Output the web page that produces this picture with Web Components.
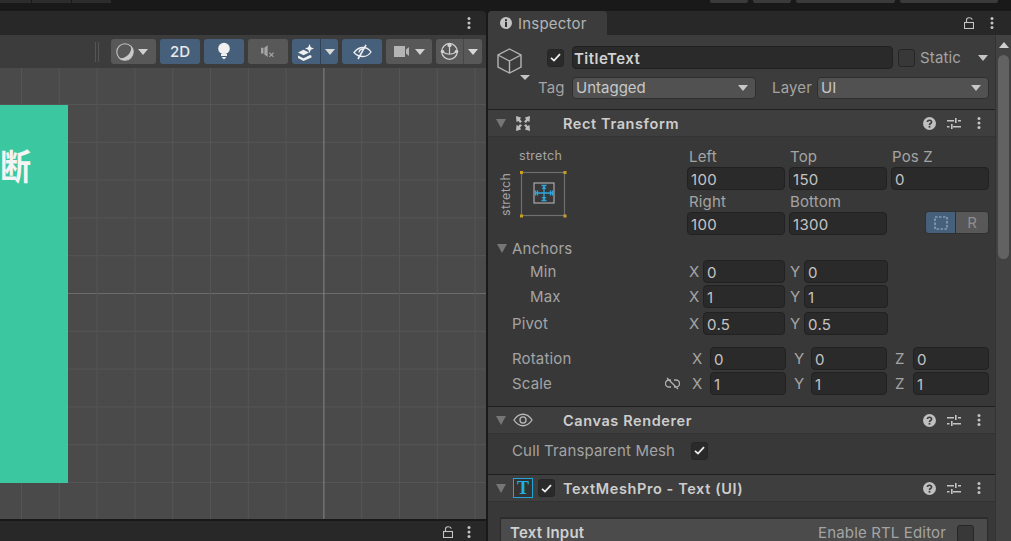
<!DOCTYPE html>
<html><head><meta charset="utf-8"><title>Inspector</title>
<style>
html,body{margin:0;padding:0;width:1011px;height:541px;overflow:hidden;background:#191919;font-family:Inter,"Noto Sans CJK SC",sans-serif;}
</style></head><body>
<app-root></app-root>
<script>
function def(name, tpl){
  customElements.define(name, class extends HTMLElement{
    connectedCallback(){
      if(this.shadowRoot) return;
      this.attachShadow({mode:'open'}).innerHTML = typeof tpl==='function'?tpl(this):tpl;
    }
  });
}
const ICON = {
  dots:`<svg width="4" height="12" viewBox="0 0 4 12"><g fill="#c4c4c4"><circle cx="2" cy="1.5" r="1.5"/><circle cx="2" cy="6" r="1.5"/><circle cx="2" cy="10.5" r="1.5"/></g></svg>`,
  lock:`<svg width="10" height="12" viewBox="0 0 10 12" fill="none" stroke="#c4c4c4" stroke-width="1.1"><rect x=".5" y="5.5" width="9" height="6"/><path d="M2.5 5V3C2.5 1.5 3.5.8 5 .8S8 1.500 8.300 2.600"/></svg>`,
  help:`<svg width="13" height="13" viewBox="0 0 12 12"><circle cx="6" cy="6" r="6" fill="#c0c0c0"/><path d="M4.100 4.700C4.100 3.500 5 3 6 3s1.900.6 1.900 1.600C7.900 6 6 6 6 7.300" fill="none" stroke="#3c3c3c" stroke-width="1.500"/><rect x="5.200" y="8.200" width="1.600" height="1.600" fill="#3c3c3c"/></svg>`,
  sliders:`<svg width="14" height="13" viewBox="0 0 14 13" fill="#c4c4c4"><rect x="0" y="3" width="7" height="1.500"/><rect x="8" y="1" width="1.600" height="5"/><rect x="11" y="3" width="3" height="1.500"/><rect x="0" y="9" width="2.500" height="1.500"/><rect x="4" y="7" width="1.600" height="5"/><rect x="6" y="9" width="8" height="1.500"/></svg>`,
  tri:`<svg width="10" height="6" viewBox="0 0 10 6"><polygon points="0,0 10,0 5,6" fill="currentColor"/></svg>`,
  fold:`<svg width="10" height="9" viewBox="0 0 10 9"><polygon points="0,0 10,0 5,9" fill="currentColor"/></svg>`,
  check:`<svg width="11" height="9" viewBox="0 0 11 9" fill="none" stroke="#eee" stroke-width="1.800"><path d="M1 4.800L4 7.600 10 1.200"/></svg>`
};
def('u-check', h=>`<style>:host{display:inline-flex;width:17px;height:18px;box-sizing:border-box;border:1px solid #262626;border-radius:3px;background:${h.hasAttribute('on')?'#2a2a2a':'#383838'};align-items:center;justify-content:center;flex:none}</style>${h.hasAttribute('on')?ICON.check:''}`);
def('u-input', `<style>:host{display:block;box-sizing:border-box;height:23px;background:#2a2a2a;border:1px solid #212121;border-radius:4px;padding-left:3px;font-size:15px;line-height:23px;color:#c4c4c4;letter-spacing:.3px;overflow:hidden;white-space:nowrap}</style><slot></slot>`);
def('u-drop', `<style>:host{display:flex;align-items:center;justify-content:space-between;box-sizing:border-box;height:22px;background:#515151;border:1px solid #2e2e2e;border-radius:4px;padding:0 7px 2px 3px;font-size:15px;color:#c8c8c8}span{color:#c8c8c8;display:flex;padding-top:2px}</style><slot></slot><span>${ICON.tri}</span>`);
def('u-axis', h=>`<style>:host{display:flex;align-items:center;font-size:15px;color:#a4a4a4}b{font-weight:400;flex:none;width:${h.getAttribute('lw')||14}px}u-input{flex:1;min-width:0}</style><b>${h.getAttribute('n')}</b><u-input><slot></slot></u-input>`);
def('u-lbl', `<style>:host{display:block;font-size:15px;color:#a4a4a4;line-height:21px;white-space:nowrap;letter-spacing:.15px}</style><slot></slot>`);
def('u-tool', h=>`<style>:host{display:flex;box-sizing:border-box;height:25px;border-radius:3px;background:${h.hasAttribute('blue')?'#46607c':'#585858'};align-items:center;justify-content:center;flex:none;color:#eaeaea;font-size:15px;font-weight:500;gap:6px}::slotted(*){flex:none}</style><slot></slot>`);
def('u-comp', h=>`<style>:host{display:flex;align-items:center;box-sizing:border-box;height:27px;background:#3e3e3e;border-bottom:1px solid #333;padding:0 14px 0 8px;color:#767676}
.ic{width:20px;height:20px;margin-left:7px;display:flex;align-items:center;justify-content:center;flex:none}
.ck{width:17px;margin-left:5px;margin-right:8px;flex:none;display:flex}
.t{flex:1;font-size:14.500px;font-weight:600;color:#cdcdcd;letter-spacing:.6px;white-space:nowrap}
.a{display:flex}.h{display:flex;margin-right:11px}.s{display:flex;margin-right:16px}</style>
<span class="a">${ICON.fold}</span><span class="ic"><slot name="icon"></slot></span><span class="ck"><slot name="check"></slot></span><span class="t">${h.getAttribute('t')}</span><span class="h">${ICON.help}</span><span class="s">${ICON.sliders}</span><span class="a">${ICON.dots}</span>`);

def('scene-toolbar', `<style>:host{display:flex;height:33px;box-sizing:border-box;background:#3c3c3c;align-items:center;justify-content:flex-end;gap:4px;padding-right:4px;color:#c4c4c4}
.sep{width:4px;height:20px;border-left:1px solid #555;border-right:1px solid #555;box-sizing:border-box;margin-right:8px}
.d{display:flex;color:#d0d0d0}.div{width:1px;height:25px;background:#2f4257;flex:none}
.split{width:1px;height:25px;background:#474747}
</style>
<span class="sep"></span>
<u-tool style="width:45px;gap:4px;justify-content:flex-start;padding-left:5px"><svg width="18" height="18" viewBox="0 0 18 18"><circle cx="9" cy="9" r="8.200" fill="none" stroke="#c4c4c4" stroke-width="1.100"/><path d="M15.200 2.800A8.800 8.800 0 0 1 2.800 15.200 11 11 0 0 0 15.200 2.800Z" fill="#cacaca"/></svg><span class="d">${ICON.tri}</span></u-tool>
<u-tool blue style="width:40px">2D</u-tool>
<u-tool blue style="width:40px"><svg width="14" height="19" viewBox="0 0 14 19" fill="#f0f0f0"><circle cx="7" cy="6.500" r="5.800"/><rect x="4" y="12" width="6" height="2"/><path d="M4.500 15h5L7 17.500Z"/></svg></u-tool>
<u-tool style="width:40px"><svg width="15" height="13" viewBox="0 0 18 15"><g fill="#a4a4a4"><rect x="0" y="3" width="3" height="7"/><path d="M4 3l4-3v14l-4-3Z"/></g><path d="M10 9l5 5M15 9l-5 5" stroke="#a4a4a4" stroke-width="1.300"/></svg></u-tool>
<div style="display:flex;flex:none;width:46px;height:25px;background:#46607c;border-radius:3px;align-items:center;color:#d8d8d8">
  <span style="width:28px;display:flex;justify-content:center"><svg width="18" height="18" viewBox="0 0 18 18" fill="#f0f0f0"><path d="M12.500 1l1.300 3.200 3.200 1.300-3.200 1.300-1.300 3.200-1.300-3.200L8 5.500l3.200-1.300Z"/><path d="M1 9.500l5.500-2.700 5.500 2.700-5.500 2.800Z"/><path d="M1 12.500l5.500 2.800 6.500-3.300 1.500.8v1.700L6.500 18 1 15Z"/></svg></span>
  <span class="div"></span>
  <span style="flex:1;display:flex;justify-content:center">${ICON.tri}</span>
</div>
<u-tool blue style="width:40px"><svg width="19" height="16" viewBox="0 0 19 16" fill="none" stroke="#eee" stroke-width="1.300"><path d="M1 8.500C4 4.500 7 3.500 10 3.500s6 1.500 8 4.500c-2 3-5 4.500-8 4.500S4 12 1 8.500Z"/><path d="M13 .8L5 15" stroke-width="1.600"/><path d="M6 8.500a4 4 0 0 1 4-3.500" /></svg></u-tool>
<u-tool style="width:46px;gap:6px"><svg width="15" height="11" viewBox="0 0 15 11" fill="#b4b4b4"><rect width="11" height="11"/><path d="M12 3.500L15 1v9L12 7.500Z"/></svg><span style="display:flex;color:#d0d0d0">${ICON.tri}</span></u-tool>
<div style="display:flex;flex:none;width:46px;height:25px;background:#585858;border-radius:3px;align-items:center;color:#d8d8d8">
  <span style="width:27px;display:flex;justify-content:center"><svg width="19" height="19" viewBox="0 0 19 19" fill="none" stroke="#d0d0d0" stroke-width="1.200"><circle cx="9.500" cy="9.500" r="7.800"/><path d="M2 9.500Q9.500 15 17 9.500M9.500 2v10"/><g fill="#d0d0d0" stroke="none"><circle cx="9.500" cy="3" r="2.200"/><circle cx="2.500" cy="9.500" r="1.800"/><circle cx="16.500" cy="9.500" r="1.800"/></g></svg></span>
  <span class="split"></span>
  <span style="flex:1;display:flex;justify-content:center">${ICON.tri}</span>
</div>`);

def('scene-view', ()=>{
  let v='',h='';
  for(let i=0;i<13;i++){const x=21.5+i*37.8;const c=i===8;v+=`<line x1="${x}" x2="${x}" y1="0" y2="451" stroke="${c?'#868686':'#555555'}"/>`;}
  for(let i=0;i<12;i++){const y=36.5+i*37.8;const c=i===5;h+=`<line y1="${y}" y2="${y}" x1="0" x2="486" stroke="${c?'#6c6c6c':'#555555'}"/>`;}
  return `<style>:host{display:block;position:relative;height:451px;background:#4a4a4a;overflow:hidden}
  svg{display:block}
  .card{position:absolute;left:0;top:36.500px;width:67.500px;height:378px;background:#3bc8a1;}
  .tt{position:absolute;left:0;top:42px;font:700 31px/36px "Noto Sans CJK SC",sans-serif;color:#f4f4f4;transform:scaleY(1.120)}
  </style><svg width="486" height="451">${h}${v}</svg><div class="card"><span class="tt">断</span></div>`;
});

def('left-panel', `<style>:host{display:flex;flex-direction:column;height:530px}
.tab{height:24px;background:#282828;display:flex;align-items:center;justify-content:flex-end;padding-right:15px;border-radius:0 4px 0 0;flex:none}
.bot{flex:1;margin-top:2px;background:#282828;display:flex;align-items:center;justify-content:flex-end;padding:2px 15px 0 0;gap:14px}
svg{display:block}</style>
<div class="tab">${ICON.dots}</div><scene-toolbar></scene-toolbar><scene-view></scene-view>
<div class="bot">${ICON.lock}${ICON.dots}</div>`);

def('anchor-widget', `<style>:host{display:block;width:199px;flex:none;box-sizing:border-box;padding:2px 0 0 11px;color:#a4a4a4;font-size:12.500px;letter-spacing:.3px}
.top{margin-left:20px;line-height:15px;height:15px}
.row{display:flex;margin-top:9px}
.v{writing-mode:vertical-rl;transform:rotate(180deg);width:13px;height:44px;line-height:13px;text-align:center}
svg{margin-left:9px;display:block;overflow:visible}</style>
<div class="top">stretch</div>
<div class="row"><div class="v">stretch</div>
<svg width="44" height="44" viewBox="0 0 44 44"><rect x=".5" y=".5" width="43" height="43" fill="none" stroke="#6f6f6f" stroke-width="1.200"/>
<g fill="#c8a020"><rect x="-1" y="-1" width="3" height="3"/><rect x="42.500" y="-1" width="3" height="3"/><rect x="-1" y="42.500" width="3" height="3"/><rect x="42.500" y="42.500" width="3" height="3"/></g>
<rect x="13" y="11" width="20" height="20" fill="none" stroke="#a8a8a8" stroke-width="1.200"/>
<g stroke="#2fa6dc" stroke-width="1.300" fill="none"><path d="M23 14v14M14.500 21h17"/><path d="M14.500 18.500v5M16.500 18.500v5M31.500 18.500v5M29.500 18.500v5M20.500 13.500h5M20.500 28.500h5"/></g>
<g fill="#2fa6dc"><path d="M23 14l2.500 3h-5ZM23 28l2.500-3h-5Z"/></g></svg></div>`);

def('rect-body', `<style>:host{display:flex;flex-direction:column;background:#383838;padding:9px 0 11px;height:269px;box-sizing:border-box}
.top{display:flex}
.g{display:grid;grid-template-columns:98px 98px 98px;column-gap:4px;grid-template-rows:21px 23px 22px 23px}
.g u-lbl{padding-left:2px;line-height:21px}.g .l2{line-height:22px;padding-top:1px}.g .n{padding-left:1px}
.seg{grid-column:3;justify-self:end;display:flex;width:64px;height:23px;border-radius:4px;overflow:hidden;border:1px solid #303030;box-sizing:border-box;margin-top:-1px}
.seg .a{width:29px;background:#46607c;display:flex;align-items:center;justify-content:center;border-right:1px solid #2f2f2f}
.seg .b{flex:1;background:#585858;color:#8f8f8f;font-size:15px;font-weight:400;text-align:center;line-height:21px}
.anch{display:flex;align-items:center;height:22px;margin-top:2px;margin-bottom:1px;padding-left:9px;color:#767676}
.anch u-lbl{margin-left:5px}
.r{display:flex;align-items:center;height:23px}
.lab{width:199px;box-sizing:border-box;padding-left:24px;flex:none;display:flex;justify-content:space-between;align-items:center}
.two{display:grid;grid-template-columns:96px 98px;gap:5px;margin-left:2px}
.three{display:grid;grid-template-columns:94px 93px 94px;gap:8px;margin-left:5px}
.ind{padding-left:42px}
</style>
<div class="top"><anchor-widget></anchor-widget><div class="g">
<u-lbl>Left</u-lbl><u-lbl class="n">Top</u-lbl><u-lbl class="n">Pos Z</u-lbl>
<u-input>100</u-input><u-input>150</u-input><u-input>0</u-input>
<u-lbl class="l2">Right</u-lbl><u-lbl class="l2 n">Bottom</u-lbl><span></span>
<u-input>100</u-input><u-input>1300</u-input>
<div class="seg"><span class="a"><svg width="14" height="14" viewBox="0 0 14 14" fill="none" stroke="#9fb4c9" stroke-width="1.200" stroke-dasharray="2.500 1.500"><rect x="1" y="1" width="12" height="12"/></svg></span><span class="b">R</span></div>
</div></div>
<div class="anch"><span style="display:flex">${ICON.fold}</span><u-lbl>Anchors</u-lbl></div>
<div class="r"><div class="lab ind"><u-lbl>Min</u-lbl></div><div class="two"><u-axis n="X">0</u-axis><u-axis n="Y">0</u-axis></div></div>
<div class="r" style="margin-top:2px"><div class="lab ind"><u-lbl>Max</u-lbl></div><div class="two"><u-axis n="X">1</u-axis><u-axis n="Y">1</u-axis></div></div>
<div class="r" style="margin-top:4px"><div class="lab"><u-lbl>Pivot</u-lbl></div><div class="two"><u-axis n="X">0.5</u-axis><u-axis n="Y">0.5</u-axis></div></div>
<div class="r" style="margin-top:12px"><div class="lab"><u-lbl>Rotation</u-lbl></div><div class="three"><u-axis n="X" lw="18">0</u-axis><u-axis n="Y" lw="17">0</u-axis><u-axis n="Z" lw="18">0</u-axis></div></div>
<div class="r" style="margin-top:2px"><div class="lab"><u-lbl>Scale</u-lbl><svg style="margin-right:7px" width="15" height="13" viewBox="0 0 15 13" fill="none" stroke="#b0b0b0" stroke-width="1.300"><path d="M6 3H4a3.500 3.500 0 0 0 0 7h2M9 3h2a3.500 3.500 0 0 1 0 7H9M2 1l11 11"/></svg></div><div class="three"><u-axis n="X" lw="18">1</u-axis><u-axis n="Y" lw="17">1</u-axis><u-axis n="Z" lw="18">1</u-axis></div></div>`);

def('go-header', `<style>:host{display:block;box-sizing:border-box;height:74px;padding-top:11px;background:#3c3c3c}
.r1{display:flex;align-items:center;height:23px;padding-left:9px}
.r2{display:flex;align-items:center;height:22px;margin-top:8px;padding-left:50px}
svg.cube{flex:none;overflow:visible;align-self:flex-start;margin-top:2px}
u-lbl{line-height:22px}
</style>
<div class="r1"><svg class="cube" width="26" height="26" viewBox="0 0 26 26" fill="none" stroke="#b4b4b4" stroke-width="1.400"><path d="M12.500 1L24 7v12l-11.500 6L1 19V7ZM1 7l11.500 6L24 7M12.500 13v12"/><polygon points="23,27 33,27 28,32" fill="#c4c4c4" stroke="none"/></svg>
<u-check on style="margin-left:24px"></u-check>
<u-input style="width:321px;margin-left:8px;font-weight:600;color:#d2d2d2;letter-spacing:.45px;padding-left:1px">TitleText</u-input>
<u-check style="margin-left:5px"></u-check>
<u-lbl style="margin-left:5px">Static</u-lbl><span style="margin-left:17px;display:flex;color:#c4c4c4">${ICON.tri}</span></div>
<div class="r2"><u-lbl style="width:34px">Tag</u-lbl><u-drop style="width:184px">Untagged</u-drop><u-lbl style="margin-left:16px;width:45px">Layer</u-lbl><u-drop style="width:172px">UI</u-drop></div>`);

def('inspector-panel', `<style>:host{display:flex;flex-direction:column;height:530px;overflow:hidden}
.tabs{height:24px;display:flex;background:#282828;flex:none;border-radius:4px 0 0 0}
.tab{width:119px;background:#3c3c3c;border-radius:4px 4px 0 0;display:flex;align-items:center;padding-left:12px;box-sizing:border-box;gap:6px;font-size:15px;color:#b4b4b4;letter-spacing:.2px}
.ctl{flex:1;display:flex;align-items:center;justify-content:flex-end;padding-right:17px;gap:16px}
.main{flex:1;display:flex;min-height:0}
.col{width:507px;flex:none;display:flex;flex-direction:column;background:#383838}
.dv{height:1px;background:#1f1f1f;flex:none}
.bar{flex:1;background:#424242;position:relative;display:flex;flex-direction:column;align-items:center;padding-top:7px;box-sizing:border-box;color:#d0d0d0;border-left:1px solid #333}
.thumb{width:11px;height:204px;background:#626262;border-radius:6px;margin-top:7px}
.cull{height:40px;box-sizing:border-box;display:flex;align-items:center;padding:0 0 7px 24px;background:#383838}
.cull u-lbl{width:179px}
.pad{padding:15px 7px 0 12px;background:#383838;flex:1;min-height:0;overflow:hidden}
.box{background:#4b4b4b;border-top:2px solid #2c2c2c;border-left:1px solid #2c2c2c;border-right:1px solid #2c2c2c;display:flex;align-items:flex-start;height:40px;box-sizing:border-box;padding:5px 13px 0 9px;font-size:15px}
.box b{flex:1;font-weight:600;color:#d0d0d0;letter-spacing:.2px;line-height:17px}
.box u-lbl{margin-right:11px;line-height:17px}
.box u-check{margin-top:1px}
.tbox{width:20px;height:20px;box-sizing:border-box;border:1px solid #23a3dc;background:#333;color:#22aee6;font:700 18px/18px "Liberation Serif",serif;text-align:center;display:block}
</style>
<div class="tabs"><div class="tab"><svg width="12" height="12" viewBox="0 0 12 12"><circle cx="6" cy="6" r="6" fill="#c4c4c4"/><rect x="5" y="5" width="2" height="5" fill="#333"/><rect x="5" y="2.200" width="2" height="2" fill="#333"/></svg>Inspector</div><div class="ctl">${ICON.lock}${ICON.dots}</div></div>
<div class="main"><div class="col">
<go-header></go-header><div class="dv"></div>
<u-comp t="Rect Transform"><svg slot="icon" width="16" height="15" viewBox="0 0 16 15" fill="#bdbdbd"><path d="M1 0l5 1.500-1 2 2 2-2 1.500-1.500-2-2 1ZM15 0l-5 1.500 1 2-2 2 2 1.500 1.500-2 2 1ZM1 15l5-1.500-1-2 2-2-2-1.500-1.500 2-2-1ZM15 15l-5-1.500 1-2-2-2 2-1.500 1.500 2 2-1Z"/></svg></u-comp>
<rect-body></rect-body><div class="dv"></div>
<u-comp t="Canvas Renderer"><svg slot="icon" width="21" height="14" viewBox="0 0 21 14" fill="none" stroke="#b8b8b8" stroke-width="1.400"><path d="M1 7C4 2.500 7 1 10.500 1S17 2.500 20 7c-3 4.500-6 6-9.500 6S4 11.500 1 7Z"/><circle cx="10.500" cy="7" r="3.200"/></svg></u-comp>
<div class="cull"><u-lbl>Cull Transparent Mesh</u-lbl><u-check on></u-check></div><div class="dv"></div>
<u-comp t="TextMeshPro - Text (UI)"><span slot="icon" class="tbox">T</span><u-check slot="check" on></u-check></u-comp>
<div class="pad"><div class="box"><b>Text Input</b><u-lbl>Enable RTL Editor</u-lbl><u-check></u-check></div></div>
</div><div class="bar"><span style="display:flex">${ICON.tri.replace('points="0,0 10,0 5,6"','points="0,6 10,6 5,0"')}</span><div class="thumb"></div></div></div>`);

def('app-root', `<style>:host{display:grid;grid-template-columns:486px 523px;column-gap:2px;grid-template-rows:11px 530px;width:1011px;height:541px;background:#191919}
.strip{grid-column:1/3;display:flex;justify-content:space-between;align-items:flex-start;padding-right:13px;background:#191919}
.g{display:flex;gap:1px}.g2{display:flex;gap:5px}
.g i{display:block;height:3px;background:#2c2c2c}.g2 i{display:block;height:3px;background:#3a3a3a;border-radius:0 0 2px 2px}
</style>
<div class="strip"><div class="g"><i style="width:31px"></i><i style="width:39px"></i><i style="width:39px"></i></div><div class="g2"><i style="width:38px"></i><i style="width:38px"></i><i style="width:99px"></i><i style="width:98px"></i></div></div>
<left-panel></left-panel><inspector-panel></inspector-panel>`);
</script>
</body></html>
